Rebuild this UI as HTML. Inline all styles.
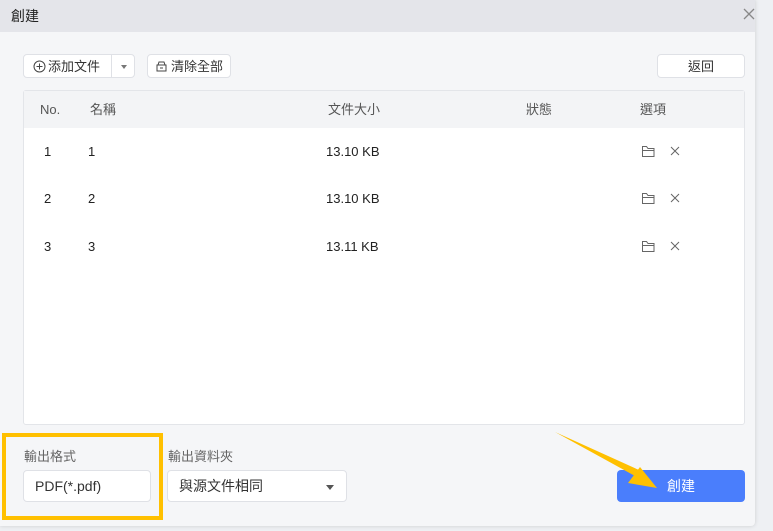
<!DOCTYPE html>
<html><head><meta charset="utf-8"><style>
*{box-sizing:border-box;margin:0;padding:0}
body{width:773px;height:531px;background:#eef0f3;font-family:"Liberation Sans","Noto Sans CJK TC",sans-serif;position:relative;overflow:hidden;color:#333}
.dlg{position:absolute;left:0;top:0;width:755px;height:526px;background:#f5f6f8;box-shadow:0 0 4px rgba(0,0,0,.15);border-radius:0 0 4px 0}
.title{height:32px;background:#e4e5ea;font-size:14px;line-height:32px;padding-left:11px;color:#222}
.btn{position:absolute;background:#fff;border:1px solid #dfe1e6;border-radius:4px;font-size:13px;color:#333;display:flex;align-items:center;justify-content:center;line-height:1}
.tbl{position:absolute;left:23px;top:90px;width:722px;height:335px;background:#fff;border:1px solid #e3e5e9;border-radius:3px}
.hd{height:37px;background:#f3f4f6;position:relative;font-size:13px;color:#555}
.t{position:absolute;font-size:13px;line-height:37px;top:0}
.lbl{position:absolute;font-size:13px;color:#666;line-height:16px}
.r{position:absolute;line-height:16px}
</style></head><body>
<div class="dlg">
<div class="title">創建</div>
<svg style="position:absolute;left:743px;top:8px" width="12" height="12"><path d="M1 1L11 11M11 1L1 11" stroke="#888" stroke-width="1.3"/></svg>
<div class="btn" style="left:23px;top:54px;width:112px;height:24px;justify-content:flex-start;padding-left:9px">
<svg width="13" height="13" style="margin-right:2px"><circle cx="6.5" cy="6.5" r="5.5" fill="none" stroke="#444"/><path d="M6.5 3.5v6M3.5 6.5h6" stroke="#444"/></svg>添加文件
<div style="position:absolute;left:87px;top:0;bottom:0;border-left:1px solid #dfe1e6;width:24px;display:flex;align-items:center;justify-content:center"><div style="width:0;height:0;border:3px solid transparent;border-top:4px solid #777;margin-top:4px"></div></div></div>
<div class="btn" style="left:147px;top:54px;width:84px;height:24px"><svg width="13" height="12" style="margin-right:3px"><path d="M2 5h9v6H2zM3 5l1-3h5l1 3M5 8h3" fill="none" stroke="#444"/></svg>清除全部</div>
<div class="btn" style="left:657px;top:54px;width:88px;height:24px">返回</div>
<div class="tbl">
<div class="hd"><span class="t" style="left:16px">No.</span><span class="t" style="left:66px">名稱</span><span class="t" style="left:304px">文件大小</span><span class="t" style="left:502px">狀態</span><span class="t" style="left:616px">選項</span></div>
</div>
<div style="position:absolute;left:23px;top:0;font-size:13px;color:#222">
<div class="r" style="top:144px;left:21px">1</div><div class="r" style="top:144px;left:65px">1</div><div class="r" style="top:144px;left:303px;width:80px">13.10 KB</div>
<div class="r" style="top:191px;left:21px">2</div><div class="r" style="top:191px;left:65px">2</div><div class="r" style="top:191px;left:303px;width:80px">13.10 KB</div>
<div class="r" style="top:239px;left:21px">3</div><div class="r" style="top:239px;left:65px">3</div><div class="r" style="top:239px;left:303px;width:80px">13.11 KB</div>
</div>
<svg style="position:absolute;left:640px;top:144px" width="44" height="110">
<g fill="none" stroke="#666" stroke-width="1">
<path d="M2.5 2.5h4l1.5 2h6v8h-11.5zM2.5 6.5h11.5"/><path d="M31 3l8 8M39 3l-8 8"/>
<g transform="translate(0,47)"><path d="M2.5 2.5h4l1.5 2h6v8h-11.5zM2.5 6.5h11.5"/><path d="M31 3l8 8M39 3l-8 8"/></g>
<g transform="translate(0,95)"><path d="M2.5 2.5h4l1.5 2h6v8h-11.5zM2.5 6.5h11.5"/><path d="M31 3l8 8M39 3l-8 8"/></g>
</g></svg>
<div class="lbl" style="left:24px;top:449px">輸出格式</div>
<div class="lbl" style="left:168px;top:449px">輸出資料夾</div>
<div class="btn" style="left:23px;top:470px;width:128px;height:32px;justify-content:flex-start;padding-left:11px;font-size:14px">PDF(*.pdf)</div>
<div class="btn" style="left:167px;top:470px;width:180px;height:32px;justify-content:flex-start;padding-left:11px;font-size:14px">與源文件相同<div style="position:absolute;right:12px;top:14px;width:0;height:0;border:4px solid transparent;border-top:5px solid #555"></div></div>
<div style="position:absolute;left:617px;top:470px;width:128px;height:32px;background:#4a7efc;border-radius:4px;color:#fff;font-size:14px;text-align:center;line-height:32px">創建</div>
</div>
<div style="position:absolute;left:2px;top:433px;width:161px;height:87px;border:4px solid #ffc000"></div>
<svg style="position:absolute;left:0;top:0" width="773" height="531"><path d="M555 432L639 470L635 476Z" fill="#ffc000"/><path d="M657 488L628 483L640 467Z" fill="#ffc000"/></svg>
</body></html>
